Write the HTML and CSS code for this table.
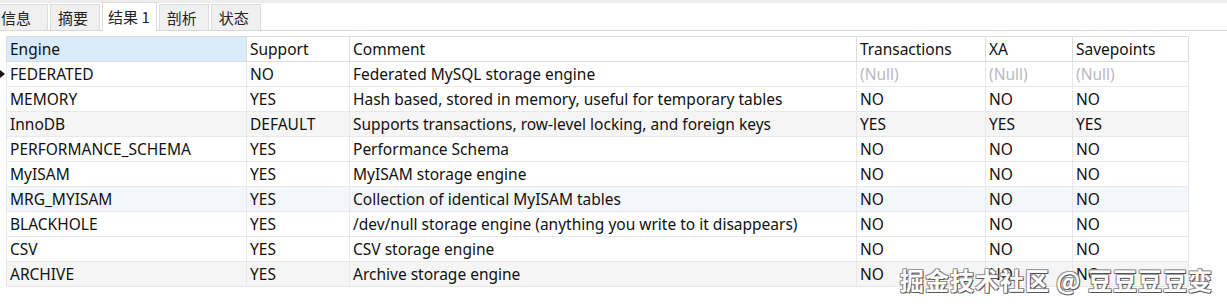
FILE: index.html
```html
<!DOCTYPE html>
<html lang="zh-CN">
<head>
  <meta charset="UTF-8">
  <title>结果 1</title>
  <link rel="stylesheet" href="styles.css">
</head>
<body>

<div class="topstrip"></div>

<div class="tabs">
  <div class="tab first">信息</div>
  <div class="tab">摘要</div>
  <div class="tab active">结果 1</div>
  <div class="tab">剖析</div>
  <div class="tab">状态</div>
</div>

<div class="grid-wrap">
  <table class="grid">
    <thead>
      <tr>
        <th class="marker"></th>
        <th class="c-engine sel">Engine</th>
        <th class="c-support">Support</th>
        <th class="c-comment">Comment</th>
        <th class="c-trans">Transactions</th>
        <th class="c-xa">XA</th>
        <th class="c-save">Savepoints</th>
      </tr>
    </thead>
    <tbody>
      <tr>
        <td class="marker"><span class="arrow"></span></td>
        <td>FEDERATED</td><td>NO</td><td>Federated MySQL storage engine</td>
        <td class="null">(Null)</td><td class="null">(Null)</td><td class="null">(Null)</td>
      </tr>
      <tr>
        <td class="marker"></td>
        <td>MEMORY</td><td>YES</td><td>Hash based, stored in memory, useful for temporary tables</td>
        <td>NO</td><td>NO</td><td>NO</td>
      </tr>
      <tr class="alt">
        <td class="marker"></td>
        <td>InnoDB</td><td>DEFAULT</td><td>Supports transactions, row-level locking, and foreign keys</td>
        <td>YES</td><td>YES</td><td>YES</td>
      </tr>
      <tr>
        <td class="marker"></td>
        <td>PERFORMANCE_SCHEMA</td><td>YES</td><td>Performance Schema</td>
        <td>NO</td><td>NO</td><td>NO</td>
      </tr>
      <tr>
        <td class="marker"></td>
        <td>MyISAM</td><td>YES</td><td>MyISAM storage engine</td>
        <td>NO</td><td>NO</td><td>NO</td>
      </tr>
      <tr class="alt blue">
        <td class="marker"></td>
        <td>MRG_MYISAM</td><td>YES</td><td>Collection of identical MyISAM tables</td>
        <td>NO</td><td>NO</td><td>NO</td>
      </tr>
      <tr>
        <td class="marker"></td>
        <td>BLACKHOLE</td><td>YES</td><td>/dev/null storage engine (anything you write to it disappears)</td>
        <td>NO</td><td>NO</td><td>NO</td>
      </tr>
      <tr>
        <td class="marker"></td>
        <td>CSV</td><td>YES</td><td>CSV storage engine</td>
        <td>NO</td><td>NO</td><td>NO</td>
      </tr>
      <tr class="alt">
        <td class="marker"></td>
        <td>ARCHIVE</td><td>YES</td><td>Archive storage engine</td>
        <td>NO</td><td>NO</td><td>NO</td>
      </tr>
    </tbody>
  </table>
</div>

<!-- site watermark sits over the bottom right of the grid -->
<div class="watermark">掘金技术社区 @ 豆豆豆豆变</div>

</body>
</html>
```

FILE: styles.css
```css
body {
  margin: 0;
  min-height: 307px;
  position: relative;
  background: #fff;
  font-family: "Noto Sans", "Noto Sans CJK SC", sans-serif;
  font-size: 15.5px;
  color: #111;
}

.topstrip {
  height: 3px;
  background-color: #ececec;
}

.tabs {
  display: flex;
  align-items: flex-end;
  height: 27px;
  border-bottom: 1px solid #d6d6d6;
  font-family: "Noto Sans CJK SC", sans-serif;
  font-size: 15px;
}

.tab {
  height: 25px;
  line-height: 25px;
  padding: 0 11px 0 7px;
  margin-right: 2px;
  background-color: #f0f0f0;
  border: 1px solid #dcdcdc;
  border-bottom: none;
  color: #222;
}

.tab.first {
  padding-left: 1px;
  padding-right: 16px;
  border-left: none;
}

.tab.active {
  height: 28px;
  line-height: 27px;
  padding: 0 6px 0 5px;
  background-color: #fff;
  margin-bottom: -1px;
}

.grid-wrap {
  padding-top: 5px;
}

.grid {
  border-collapse: collapse;
  table-layout: fixed;
  width: 1188px;
}

.grid th,
.grid td {
  height: 24px;
  padding: 0 3px;
  border: 1px solid #e8e8e8;
  text-align: left;
  font-weight: normal;
  white-space: nowrap;
  overflow: hidden;
}

.grid th {
  border-color: #dcdcdc;
}

.grid .marker {
  width: 6px;
  padding: 0;
  border-top: none;
  border-bottom: none;
  border-left: none;
  position: relative;
}

.c-engine { width: 233px; }
.c-support { width: 96px; }
.c-comment { width: 500px; }
.c-trans { width: 122px; }
.c-xa { width: 80px; }
.c-save { width: 109px; }

.grid th.sel {
  background-color: #d9eaf8;
}

.arrow {
  position: absolute;
  left: 0;
  top: 8px;
  border-left: 5px solid #111;
  border-top: 4px solid transparent;
  border-bottom: 4px solid transparent;
}

.grid tr.alt td {
  background-color: #f5f5f5;
}

.grid tr.blue td {
  background-color: #f3f6fa;
}

.grid tr td.marker {
  background-color: #fff;
}

.grid td.null {
  color: #b8b8c4;
}

.watermark {
  position: absolute;
  right: 14px;
  top: 262px;
  font-family: "Noto Sans CJK SC", sans-serif;
  font-size: 24px;
  font-weight: bold;
  color: #fff;
  letter-spacing: 1px;
  text-shadow: 1px 1px 0 #555, -1px -1px 0 #999, 1px -1px 0 #888, -1px 1px 0 #888;
}
```
